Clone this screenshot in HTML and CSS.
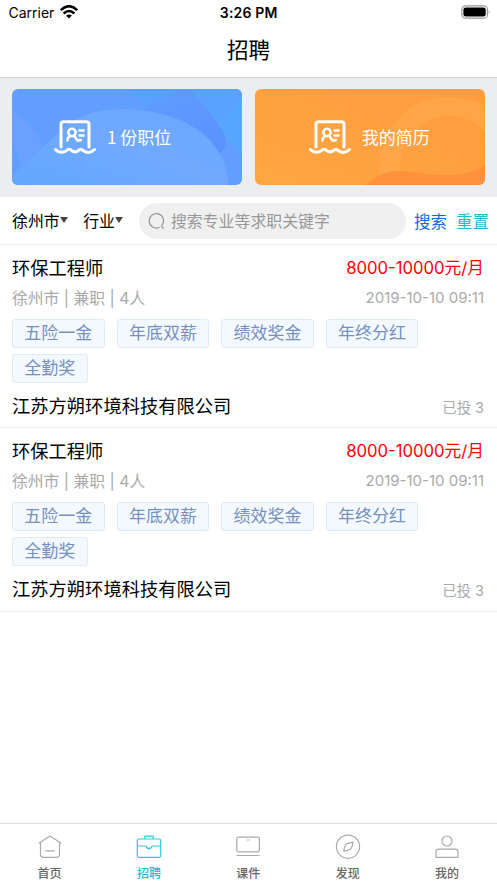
FILE: index.html
```html
<!DOCTYPE html>
<html lang="zh-CN">
<head>
<meta charset="utf-8">
<title>招聘</title>
<link rel="stylesheet" href="styles.css">
</head>
<body>
<svg class="defs" aria-hidden="true">
  <symbol id="resume" viewBox="0 0 42 34">
    <g fill="none" stroke="#fff" stroke-linecap="round" stroke-linejoin="round">
      <path stroke-width="3" d="M7 27V4.500Q7 1.800 9.700 1.800H32.300Q35 1.800 35 4.500V27"/>
      <path stroke-width="3" d="M1.500 29.500C5 33.300 10 33.300 14 29.500C15.500 29 16.500 29.300 17.500 30.500C20 32.500 22 32.500 24.500 30.500C26 29 27.500 29 29 30.500C33 33.300 37 33 40.500 29.500"/>
      <circle cx="18" cy="12.500" r="3.700" stroke-width="2.500"/>
      <path stroke-width="2.500" d="M13.300 20.500Q14 16.700 16.500 15.800M20 15.800L23.500 20.500H25.500"/>
      <path stroke-width="2.300" stroke-linecap="butt" d="M24.500 10.500H30.500M24.500 15.500H30.500M24.500 20H28"/>
    </g>
  </symbol>
</svg>
<header class="header">
  <div class="status">
    <div class="carrier">Carrier
      <svg width="18" height="14" viewBox="0 0 18 14">
        <g fill="none" stroke="#000" stroke-width="2.500">
          <path d="M.8 5.200Q9-2.800 17.200 5.200"/>
          <path d="M3.600 8.500Q9 3.500 14.400 8.500"/>
        </g>
        <path d="M6.100 10.600Q9 8.300 11.900 10.600L9 13.600Z"/>
      </svg>
    </div>
    <div class="time">3:26 PM</div>
    <svg class="battery" width="30" height="14" viewBox="0 0 30 14">
      <rect x=".8" y=".8" width="25.600" height="12.400" rx="3.800" fill="none" stroke="#999" stroke-width="1.200"/>
      <rect x="2.400" y="2.400" width="22.300" height="9.200" rx="2.300"/>
      <path d="M27.800 4.700Q29.600 7 27.800 9.300Z" fill="#999"/>
    </svg>
  </div>
  <h1>招聘</h1>
</header>
<section class="cards">
  <a class="card">
    <svg class="art" viewBox="0 0 230 96" preserveAspectRatio="none">
      <defs>
        <linearGradient id="b1" x1="0" y1="1" x2="1" y2="0"><stop offset="0" stop-color="#61a7ff"/><stop offset=".5" stop-color="#70a9ff"/><stop offset="1" stop-color="#6ba7ff"/></linearGradient>
        <linearGradient id="b2" x1="0" y1="0" x2="1" y2="1"><stop offset="0" stop-color="#5f9dff"/><stop offset="1" stop-color="#5b91ff"/></linearGradient>
      </defs>
      <path fill="#609eff" d="M0 0H230V96H0Z"/>
      <path fill="#59a1ff" d="M116 0H172L148 23H139Z"/>
      <path fill="#5ba1ff" d="M178 0H230V10L203 37Z"/>
      <path fill="#56a8ff" d="M230 10V64L203 37Z"/>
      <path fill="url(#b2)" d="M168 0H178L211 42Q218 57 206 66Q190 75 175 67L130 20Z"/>
      <path fill="#6aa0ff" d="M0 22Q21 32 32 60L8 84L0 96Z"/>
      <path fill="#629eff" d="M0 52Q8 66 9 82L0 88Z"/>
      <path fill="url(#b1)" d="M0 87L48 42C66 26 84 20 112 20C174 22 214 50 216 96H0Z"/>
    </svg>
    <svg class="badge" width="42" height="34"><use href="#resume"/></svg>
    <span>1 份职位</span>
  </a>
  <a class="card orange">
    <svg class="art" viewBox="0 0 230 96" preserveAspectRatio="none">
      <defs>
        <linearGradient id="o1" x1="0" y1="1" x2="1" y2="0"><stop offset="0" stop-color="#ffa642"/><stop offset="1" stop-color="#ff9b40"/></linearGradient>
      </defs>
      <path fill="url(#o1)" d="M0 0H230V96H0Z"/>
      <path fill="#ffa84b" fill-opacity=".75" d="M124 96C120 55 143 8 190 8Q214 8 230 17V43Q215 27 195 27C166 27 141 52 145 86Z"/>
      <path fill="#ff913d" d="M110 96Q125 82 144 82C170 83 200 94 230 76V96Z"/>
    </svg>
    <svg class="badge" width="42" height="34"><use href="#resume"/></svg>
    <span>我的简历</span>
  </a>
</section>
<section class="filters">
  <div class="pick">徐州市<i></i></div>
  <div class="pick trade">行业<i></i></div>
  <div class="search">
    <svg width="18" height="18" viewBox="0 0 18 18" fill="none" stroke="#999" stroke-width="1.200"><path d="M11.500 15.300A7.200 7.200 0 1 1 14 13.300M13.500 13.500Q13 15 16 16.500"/></svg>
    <span>搜索专业等求职关键字</span>
  </div>
  <a class="go">搜索</a>
  <a class="reset">重置</a>
</section>
<main>
  <article class="job">
    <div class="row head"><h2>环保工程师</h2><b>8000-10000元/月</b></div>
    <div class="row meta"><span>徐州市 | 兼职 | 4人</span><time>2019-10-10 09:11</time></div>
    <div class="tags"><span>五险一金</span><span>年底双薪</span><span>绩效奖金</span><span>年终分红</span><span>全勤奖</span></div>
    <div class="row firm"><h3>江苏方朔环境科技有限公司</h3><small>已投 3</small></div>
  </article>
  <article class="job">
    <div class="row head"><h2>环保工程师</h2><b>8000-10000元/月</b></div>
    <div class="row meta"><span>徐州市 | 兼职 | 4人</span><time>2019-10-10 09:11</time></div>
    <div class="tags"><span>五险一金</span><span>年底双薪</span><span>绩效奖金</span><span>年终分红</span><span>全勤奖</span></div>
    <div class="row firm"><h3>江苏方朔环境科技有限公司</h3><small>已投 3</small></div>
  </article>
</main>
<nav class="tabs">
  <a><svg viewBox="0 0 26 26"><path d="M1.800 9.200L13 2L24.200 9.200M3.500 8.500V20Q3.500 23.300 6.800 23.300H19.200Q22.500 23.300 22.500 20V8.500M8.300 16.800H17.700"/></svg><span>首页</span></a>
  <a class="on"><svg viewBox="0 0 26 26"><rect x="1.300" y="5" width="23.400" height="18.300" rx="1.500"/><path d="M8.800 5V2.200H17.200V5M1.300 12H10L11 14H15L16 12H24.700M10 12Q10.500 14.800 13 14.800T16 12"/></svg><span>招聘</span></a>
  <a><svg viewBox="0 0 26 26"><rect x="1.800" y="3.200" width="22.600" height="14.600" rx="2"/><path d="M1.500 21.500H24.700M12 6H14.500"/></svg><span>课件</span></a>
  <a><svg viewBox="0 0 26 26"><circle cx="13" cy="12.700" r="11.600"/><path d="M17.700 8.200Q17.800 12.500 15.700 15.200Q12.500 16.500 8.700 17.200Q9.200 13.300 11 10.300Q13.800 9 17.700 8.200Z"/></svg><span>发现</span></a>
  <a><svg viewBox="0 0 26 26"><circle cx="13" cy="7" r="5"/><path d="M2 23.300V18Q2 15.200 4.800 15.200H21.200Q24 15.200 24 18V23.300Z"/></svg><span>我的</span></a>
</nav>
</body>
</html>
```
FILE: styles.css
```css
* { box-sizing: border-box; }
body {
  margin: 0;
  height: 883px;
  display: flex;
  flex-direction: column;
  overflow: hidden;
  background: #fff;
  color: #000;
  font-family: Inter, "Noto Sans CJK SC", sans-serif;
}
h1, h2, h3 { margin: 0; font-weight: 400; }
.defs { position: absolute; width: 0; height: 0; }
.header { height: 78px; flex: none; border-bottom: 1px solid #cdcdd0; }
.status {
  display: grid;
  grid-template-columns: 1fr auto 1fr;
  align-items: center;
  height: 25px;
  padding: 0 6px 0 8.500px;
}
.carrier { display: flex; align-items: center; gap: 6px; font-size: 14px; }
.carrier svg { margin-top: -2px; }
.time { margin-left: -2px; font-size: 14px; font-weight: 600; letter-spacing: .2px; }
.battery { justify-self: end; margin-top: -1px; }
h1 { font-size: 21.600px; line-height: 50px; text-align: center; }
.cards {
  flex: none;
  display: grid;
  grid-template-columns: 1fr 1fr;
  gap: 12.500px;
  height: 119px;
  padding: 11px 12px 12px;
  background: #ecedf1;
}
.card {
  position: relative;
  display: flex;
  align-items: center;
  gap: 11px;
  padding-left: 42px;
  border-radius: 6px;
  overflow: hidden;
  color: #fff;
  font-family: "Noto Sans CJK SC", sans-serif;
  font-size: 17px;
}
.card span { padding-bottom: 2px; }
.card.orange { padding-left: 54px; }
.art { position: absolute; inset: 0; width: 100%; height: 100%; }
.badge, .card span { position: relative; }
.badge { flex: none; }
.filters {
  flex: none;
  display: flex;
  align-items: center;
  height: 48px;
  padding-left: 12px;
  border-bottom: 1px solid #eaeaea;
  font-size: 15.900px;
}
.pick { display: flex; align-items: center; white-space: nowrap; }
.trade { margin-left: 15.500px; }
.pick i {
  margin: -2px 0 0 0;
  border: 4.500px solid transparent;
  border-top: 6px solid #444;
  border-bottom: 0;
}
.search {
  display: flex;
  align-items: center;
  gap: 5px;
  width: 267px;
  height: 36px;
  margin-left: 16.500px;
  padding-left: 8.500px;
  border-radius: 18px;
  background: #f0f0f0;
  color: #999;
}
.go, .reset { font-size: 16.500px; white-space: nowrap; }
.go { margin-left: 7.500px; color: #116bea; }
.reset { margin-left: 9px; color: #20bdd0; }
.job {
  height: 183.500px;
  padding: 7px 13px 0 12px;
  border-bottom: 1px solid #e8eaef;
}
.job:first-child { height: 183px; }
.row { display: flex; justify-content: space-between; align-items: center; white-space: nowrap; }
.head { height: 29px; }
.head h2, .head b { font-size: 18.300px; font-weight: 400; }
.head b { font-size: 16.700px; color: #f00; }
.meta { height: 32px; color: #aaa; font-size: 15.800px; }
.meta time { font-size: 15px; }
.tags { display: flex; flex-wrap: wrap; gap: 6.500px 12px; margin-right: -1px; padding-top: 6px; }
.tags span {
  height: 28.500px;
  padding: 0 11.300px;
  border: 1px solid #deebf7;
  border-radius: 3px;
  background: #f4f9ff;
  color: #7590c1;
  font-size: 17px;
  line-height: 27px;
}
.firm { height: 33px; margin-top: 6px; }
.firm h3 { font-size: 18.300px; }
.firm small { margin-top: 3px; color: #aaa; font-size: 14.400px; }
.tabs {
  flex: none;
  display: grid;
  grid-template-columns: repeat(5, 1fr);
  height: 60px;
  margin-top: auto;
  border-top: 1px solid #dedede;
}
.tabs a {
  display: flex;
  flex-direction: column;
  align-items: center;
  padding: 10px .4px 0 0;
  color: #666;
  font-size: 12px;
  font-weight: 500;
}
.tabs svg { width: 26px; height: 26px; fill: none; stroke: #aaa; stroke-width: 1.200; stroke-linejoin: round; }
.tabs span { line-height: 18px; margin-top: 5px; }
.tabs .on { color: #20bdd0; }
.tabs .on svg { stroke: #2ccbdc; }
```
